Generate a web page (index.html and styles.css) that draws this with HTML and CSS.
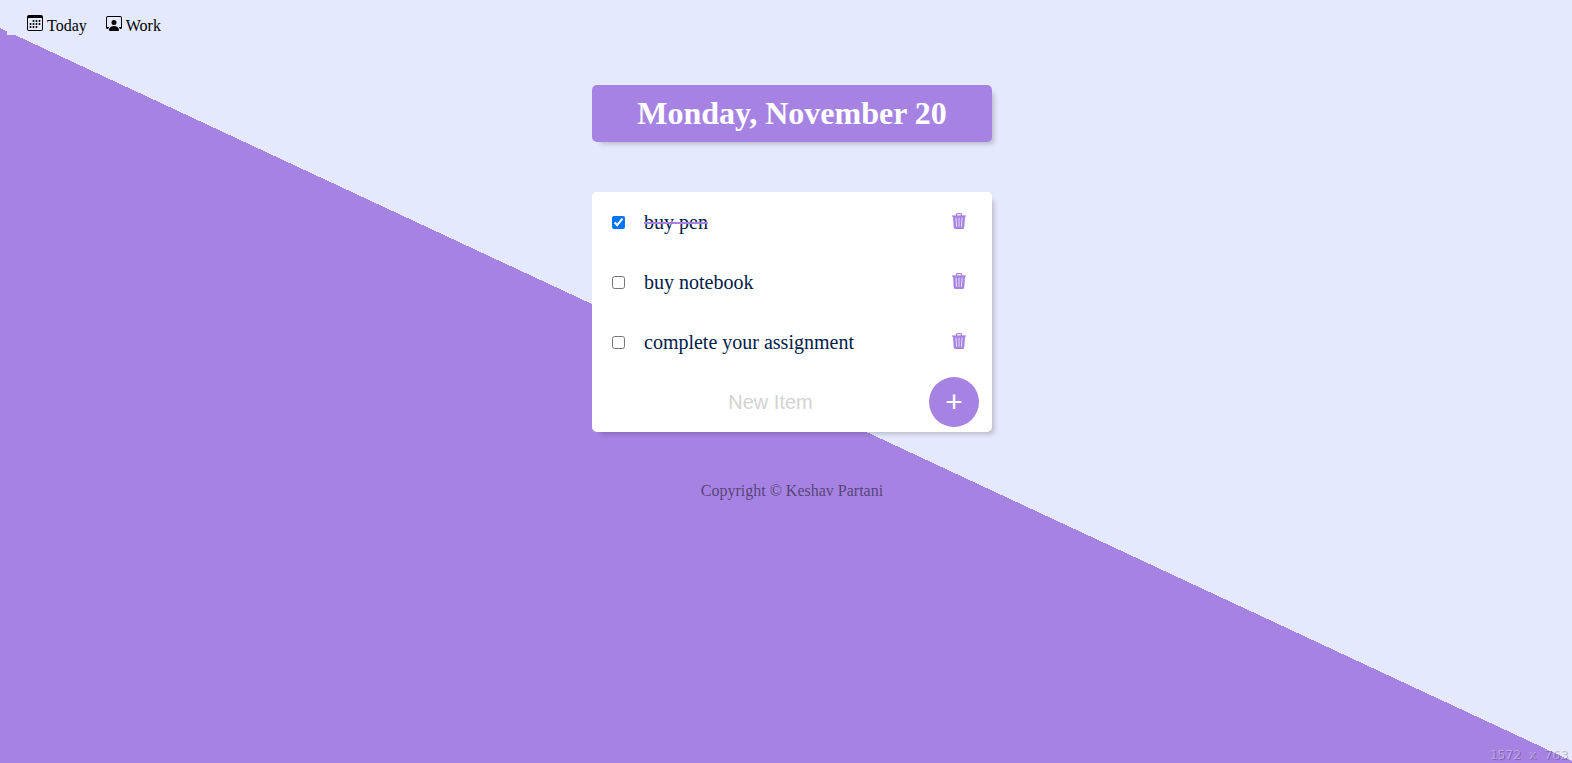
FILE: index.html
```html
<!DOCTYPE html>
<html lang="en">
<head>
<meta charset="utf-8">
<title>Todo List</title>
<link rel="stylesheet" href="styles.css">
</head>
<body>
<svg class="sprite" aria-hidden="true">
  <symbol id="trash" viewBox="0 0 16 16">
    <path d="M11 1.5v1h3.5a.5.5 0 0 1 0 1h-.538l-.853 10.66A2 2 0 0 1 11.115 16h-6.23a2 2 0 0 1-1.994-1.84L2.038 3.5H1.5a.5.5 0 0 1 0-1H5v-1A1.5 1.5 0 0 1 6.5 0h3A1.5 1.5 0 0 1 11 1.5Zm-5 0v1h4v-1a.5.5 0 0 0-.5-.5h-3a.5.5 0 0 0-.5.5ZM4.5 5.029l.5 8.5a.5.5 0 1 0 .998-.06l-.5-8.5a.5.5 0 1 0-.998.06Zm6.53-.528a.5.5 0 0 0-.528.47l-.5 8.5a.5.5 0 0 0 .998.058l.5-8.5a.5.5 0 0 0-.47-.528ZM8 4.5a.5.5 0 0 0-.5.5v8.5a.5.5 0 0 0 1 0V5a.5.5 0 0 0-.5-.5Z"/>
  </symbol>
</svg>
<nav class="nav">
  <a class="nav-link" href="#today">
    <svg class="nav-icon" viewBox="0 0 16 16" aria-hidden="true"><path d="M14 0H2a2 2 0 0 0-2 2v12a2 2 0 0 0 2 2h12a2 2 0 0 0 2-2V2a2 2 0 0 0-2-2zM1 3.857C1 3.384 1.448 3 2 3h12c.552 0 1 .384 1 .857v10.286c0 .473-.448.857-1 .857H2c-.552 0-1-.384-1-.857V3.857z"/><path d="M6.5 7a1 1 0 1 0 0-2 1 1 0 0 0 0 2zm3 0a1 1 0 1 0 0-2 1 1 0 0 0 0 2zm3 0a1 1 0 1 0 0-2 1 1 0 0 0 0 2zm-9 3a1 1 0 1 0 0-2 1 1 0 0 0 0 2zm3 0a1 1 0 1 0 0-2 1 1 0 0 0 0 2zm3 0a1 1 0 1 0 0-2 1 1 0 0 0 0 2zm3 0a1 1 0 1 0 0-2 1 1 0 0 0 0 2zm-9 3a1 1 0 1 0 0-2 1 1 0 0 0 0 2zm3 0a1 1 0 1 0 0-2 1 1 0 0 0 0 2zm3 0a1 1 0 1 0 0-2 1 1 0 0 0 0 2z"/></svg>
    <span>Today</span>
  </a>
  <a class="nav-link" href="#work">
    <svg class="nav-icon" viewBox="0 0 16 16" aria-hidden="true"><path d="M4 16s-1 0-1-1 1-4 5-4 5 3 5 4-1 1-1 1H4Zm4-5.95a2.5 2.5 0 1 0 0-5 2.5 2.5 0 0 0 0 5Z"/><path d="M2 1a2 2 0 0 0-2 2v9.5A1.5 1.5 0 0 0 1.5 14h.653a5.373 5.373 0 0 1 1.066-2H1V3a1 1 0 0 1 1-1h12a1 1 0 0 1 1 1v9h-2.219c.554.654.89 1.373 1.066 2h.653a1.5 1.5 0 0 0 1.5-1.5V3a2 2 0 0 0-2-2H2Z"/></svg>
    <span>Work</span>
  </a>
</nav>
<main class="main">
  <header class="box heading"><h1>Monday, November 20</h1></header>
  <section class="box list">
    <div class="item">
      <input type="checkbox" id="item-1" checked>
      <label for="item-1">buy pen</label>
      <button class="delete" type="button" aria-label="Delete buy pen"><svg viewBox="0 0 16 16"><use href="#trash"/></svg></button>
    </div>
    <div class="item">
      <input type="checkbox" id="item-2">
      <label for="item-2">buy notebook</label>
      <button class="delete" type="button" aria-label="Delete buy notebook"><svg viewBox="0 0 16 16"><use href="#trash"/></svg></button>
    </div>
    <div class="item">
      <input type="checkbox" id="item-3">
      <label for="item-3">complete your assignment</label>
      <button class="delete" type="button" aria-label="Delete complete your assignment"><svg viewBox="0 0 16 16"><use href="#trash"/></svg></button>
    </div>
    <form class="new-item">
      <input type="text" placeholder="New Item" aria-label="New Item" autocomplete="off">
      <button class="add" type="button">+</button>
    </form>
  </section>
  <footer class="footer">Copyright © Keshav Partani</footer>
</main>
<div class="size-readout">1572 x 763</div>
</body>
</html>
```
FILE: styles.css
```css
* {
  box-sizing: border-box;
}

html {
  min-height: 100%;
  background: #e4e9fd linear-gradient(25deg, #a683e3 50%, #e4e9fd 50%) no-repeat;
  background-size: 100% 789px;
}

body {
  margin: 0;
  font-family: "Liberation Serif", serif;
  font-size: 16px;
}

.sprite {
  display: none;
}

.nav {
  display: flex;
  gap: 19px;
  margin-left: 7px;
  padding: 15px 20px 0;
  height: 35px;
  background: #e4e9fd;
}

.nav-link {
  display: flex;
  gap: 4px;
  color: #000;
  line-height: 22px;
  text-decoration: none;
}

.nav-icon {
  width: 16px;
  height: 16px;
}

.main {
  padding: 50px 0 0 12px;
}

.box {
  max-width: 400px;
  margin: 0 auto 50px;
  border-radius: 5px;
  background: #fff;
  box-shadow: 5px 5px 5px -3px rgba(0, 0, 0, 0.2);
}

.heading {
  padding: 10px;
  background: #a683e3;
  text-align: center;
}

.heading h1 {
  margin: 0;
  color: #fff;
  font-size: 32px;
  line-height: 37px;
}

.item {
  display: flex;
  align-items: center;
  height: 60px;
  padding: 0 25px 0 20px;
}

.item input {
  width: 13px;
  height: 13px;
  margin: 0 19px 0 0;
}

.item label {
  color: #00204a;
  font-size: 20px;
  line-height: 24px;
}

.item input:checked + label {
  text-decoration: line-through 2px #a683e3;
}

.delete {
  margin: 0 0 2px auto;
  padding: 0;
  border: 0;
  background: none;
  line-height: 0;
}

.delete svg {
  width: 16px;
  height: 16px;
  fill: #a683e3;
  stroke: #a683e3;
  stroke-width: 0.3;
}

.new-item {
  display: flex;
  align-items: center;
  height: 60px;
  padding: 0 13px 0 20px;
}

.new-item input {
  flex: 1;
  min-width: 0;
  height: 60px;
  padding: 0;
  border: 0;
  outline: 0;
  background: transparent;
  font: 20px "Liberation Sans", sans-serif;
  text-align: center;
}

.new-item input::placeholder {
  color: #d3d3d3;
}

.add {
  width: 50px;
  height: 50px;
  padding: 0;
  border: 0;
  border-radius: 50%;
  background: #a683e3;
  color: #fff;
  font: 30px "Liberation Sans", sans-serif;
}

.footer {
  color: rgba(0, 0, 0, 0.5);
  line-height: 18px;
  text-align: center;
}

.size-readout {
  position: fixed;
  right: 4px;
  bottom: 0;
  color: rgba(255, 255, 255, 0.3);
  font: 13px/16px "DejaVu Sans Mono", monospace;
  text-shadow: 1px 1px 1px rgba(0, 0, 0, 0.25);
}
```
